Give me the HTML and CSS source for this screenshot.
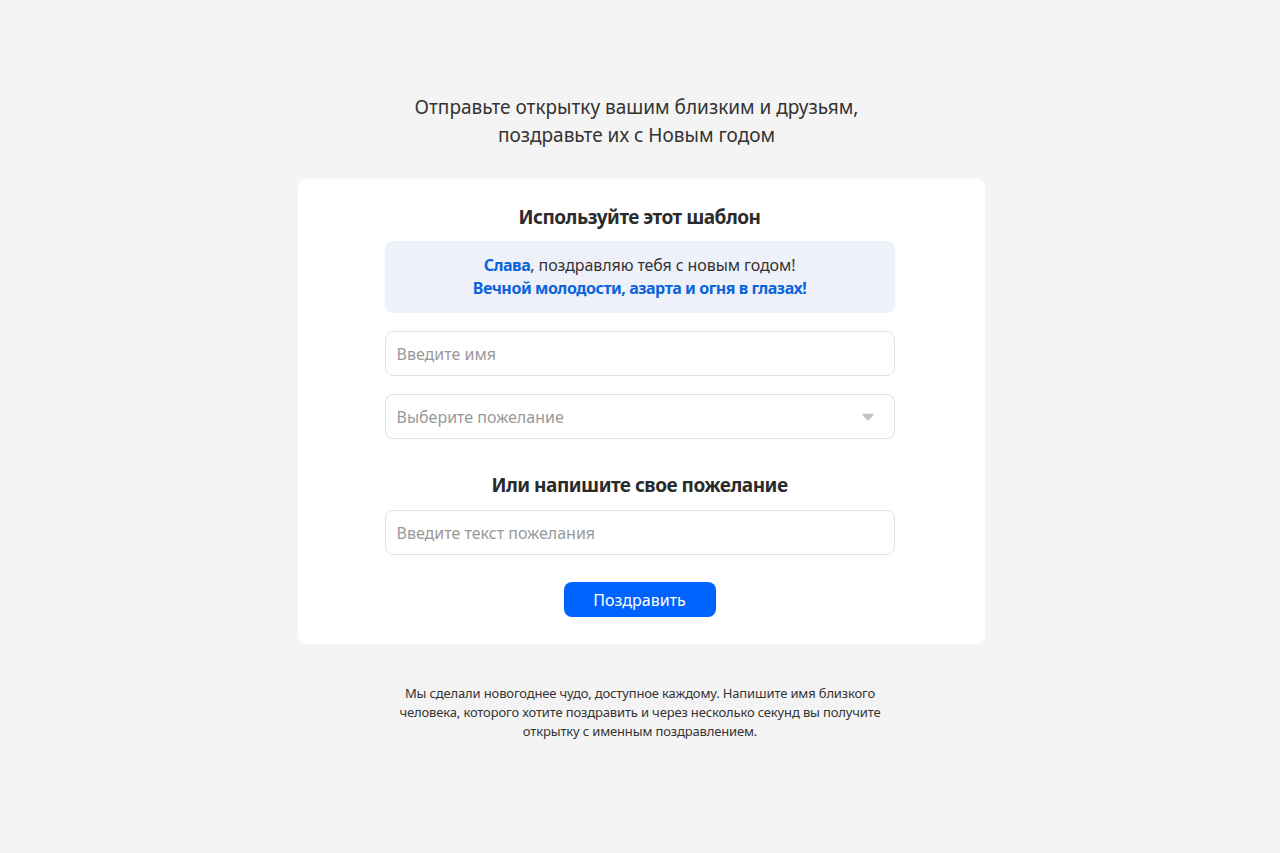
FILE: index.html
```html
<!DOCTYPE html>
<html lang="ru">
<head>
  <meta charset="UTF-8" />
  <meta name="viewport" content="width=device-width, initial-scale=1.0"/>
  <title>Новогодняя открытка</title>
  <link rel="stylesheet" href="styles.css">
</head>
<body>

  <p class="lead">Отправьте открытку вашим близким и друзьям,<br>поздравьте их с Новым годом</p>

  <div class="card">
    <h2>Используйте этот шаблон</h2>

    <div class="template">
      <span class="accent">Слава</span>, поздравляю тебя с новым годом!<br>
      <span class="accent">Вечной молодости, азарта и огня в глазах!</span>
    </div>

    <input class="field" type="text" placeholder="Введите имя">

    <div class="select">
      <span>Выберите пожелание</span>
      <svg width="12" height="8" viewBox="0 0 12 8"><path d="M1 1.5h10L6 7z" fill="#c4c4c4" stroke="#c4c4c4" stroke-linejoin="round" stroke-width="1.5"/></svg>
    </div>

    <h2 class="second">Или напишите свое пожелание</h2>

    <input class="field" type="text" placeholder="Введите текст пожелания">

    <button class="btn">Поздравить</button>
  </div>

  <p class="note">
    Мы сделали новогоднее чудо, доступное каждому. Напишите имя близкого<br>
    человека, которого хотите поздравить и через несколько секунд вы получите<br>
    открытку с именным поздравлением.
  </p>

</body>
</html>
```

FILE: styles.css
```css
body {
  margin: 0;
  background: #f4f4f4;
  font-family: "Noto Sans", "Open Sans", sans-serif;
  color: #333;
}
.lead {
  margin: 93px 0 30px;
  padding-right: 7px;
  text-align: center;
  font-size: 19px;
  line-height: 28px;
  color: #333;
}
.card {
  width: 687px;
  box-sizing: border-box;
  margin: 0 auto;
  background: #fff;
  border-radius: 8px;
  padding: 25px 90px 27px 87px;
  display: flex;
  flex-direction: column;
  align-items: center;
  position: relative;
  left: 1px;
}
h2 {
  margin: 0 0 11px;
  font-size: 19px;
  letter-spacing: -0.5px;
  line-height: 26px;
  font-weight: 700;
  color: #2b2b2b;
}
h2.second {
  margin: 33px 0 12px;
}
.template {
  width: 100%;
  box-sizing: border-box;
  background: #eff1fa;
  border-radius: 8px;
  padding: 13px 10px;
  text-align: center;
  font-size: 16px;
  letter-spacing: -0.1px;
  line-height: 23px;
  color: #333;
}
.accent {
  color: #0a64dc;
  font-weight: 700;
  letter-spacing: -0.45px;
}
.field, .select {
  width: 100%;
  box-sizing: border-box;
  height: 45px;
  border: 1px solid #e2e2e2;
  border-radius: 8px;
  padding: 0 11px;
  font-family: inherit;
  font-size: 16px;
  color: #333;
  background: #fff;
  outline: none;
}
.field {
  margin-top: 18px;
}
.field::placeholder, .select span {
  color: #999;
}
.select {
  margin-top: 18px;
  display: flex;
  align-items: center;
  justify-content: space-between;
  padding-right: 20px;
}
.second + .field {
  margin-top: 0;
}
.btn {
  margin-top: 27px;
  width: 152px;
  height: 35px;
  border: none;
  border-radius: 8px;
  background: #0062ff;
  color: #fff;
  font-family: inherit;
  font-size: 16px;
}
.note {
  width: 520px;
  margin: 40px auto 0;
  text-align: center;
  font-size: 13px;
  letter-spacing: -0.15px;
  line-height: 19px;
  color: #333;
}
```
